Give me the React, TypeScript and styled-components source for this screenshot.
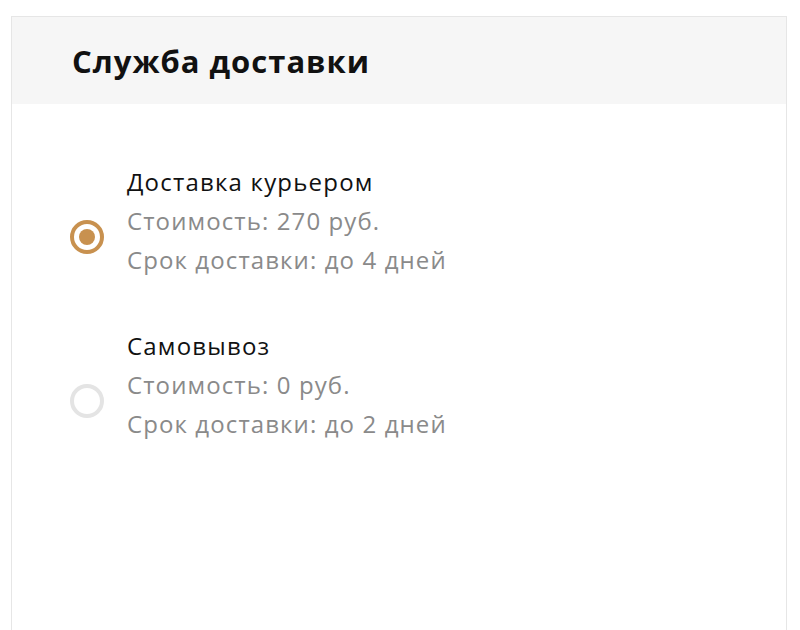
import React, { useState } from "react";
import styled, { createGlobalStyle } from "styled-components";

const Global = createGlobalStyle`
  html, body { margin: 0; padding: 0; background: #ffffff; }
  body { font-family: "Open Sans", "Noto Sans", sans-serif; }
  * { box-sizing: border-box; }
`;

const Page = styled.div`
  padding: 16px 13px 0 11px;
  height: 630px;
  overflow: hidden;
`;

const Card = styled.section`
  border: 1px solid #e6e6e6;
  border-bottom: none;
  height: 640px;
  background: #fff;
`;

const Header = styled.header`
  background: #f6f6f6;
  height: 87px;
  display: flex;
  align-items: center;
  padding-left: 60px;
`;

const Title = styled.h2`
  margin: 0;
  font-size: 31px;
  font-weight: 700;
  color: #111;
  letter-spacing: 1px;
`;

const List = styled.div`
  display: flex;
  flex-direction: column;
  gap: 47px;
  padding: 58px 0 0 58px;
`;

const Option = styled.label`
  display: flex;
  align-items: flex-start;
  gap: 23px;
  cursor: pointer;
`;

const Radio = styled.span<{ $checked: boolean }>`
  flex: none;
  margin-top: 58px;
  width: 34px;
  height: 34px;
  border-radius: 50%;
  border: 4px solid ${(p) => (p.$checked ? "#c8914f" : "#e4e4e4")};
  display: flex;
  align-items: center;
  justify-content: center;
  &::after {
    content: "";
    width: 16px;
    height: 16px;
    border-radius: 50%;
    background: ${(p) => (p.$checked ? "#c8914f" : "transparent")};
  }
`;

const Info = styled.div`
  display: flex;
  flex-direction: column;
`;

const Name = styled.div`
  font-size: 24px;
  line-height: 39px;
  letter-spacing: 1.2px;
  color: #111;
`;

const Detail = styled.div`
  font-size: 24px;
  line-height: 39px;
  letter-spacing: 1.1px;
  color: #8a8a8a;
`;

const options = [
  { name: "Доставка курьером", price: "270", days: "4" },
  { name: "Самовывоз", price: "0", days: "2" },
];

export default function App() {
  const [selected, setSelected] = useState(0);
  return (
    <>
      <Global />
      <Page>
        <Card>
          <Header>
            <Title>Служба доставки</Title>
          </Header>
          <List>
            {options.map((o, i) => (
              <Option key={o.name} onClick={() => setSelected(i)}>
                <Radio $checked={selected === i} />
                <Info>
                  <Name>{o.name}</Name>
                  <Detail>Стоимость: {o.price} руб.</Detail>
                  <Detail>Срок доставки: до {o.days} дней</Detail>
                </Info>
              </Option>
            ))}
          </List>
        </Card>
      </Page>
    </>
  );
}
